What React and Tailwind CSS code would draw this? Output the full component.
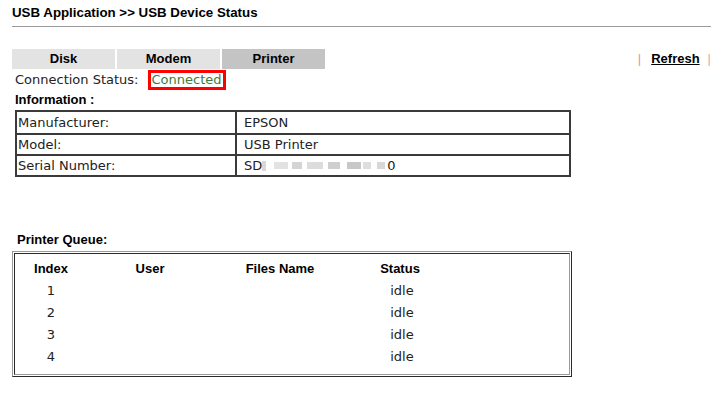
export default function App() {
    const info = [
        { label: "Manufacturer:", value: "EPSON" },
        { label: "Model:", value: "USB Printer" },
        { label: "Serial Number:", value: null },
    ];

    return (
        <div className="w-[727px] h-[411px] bg-white text-black font-['Liberation_Sans',Arial,sans-serif] overflow-hidden">

            {/* TITLE */}
            <div className="pl-[12px] pr-[16px] pt-[4px]">
                <div className="text-[13.3px] font-bold leading-[17px] h-[22px]">
                    USB Application &gt;&gt; USB Device Status
                </div>
                <div className="h-px bg-[#9a9a9a]" />
            </div>

            {/* TABS + REFRESH */}
            <div className="mt-[22px] pl-[12px] pr-[16px] flex items-center justify-between">
                <div className="flex gap-[2px]">
                    <div className="w-[103px] h-[20px] bg-[#e3e3e3] flex items-center justify-center text-[13px] font-bold">Disk</div>
                    <div className="w-[103px] h-[20px] bg-[#e3e3e3] flex items-center justify-center text-[13px] font-bold">Modem</div>
                    <div className="w-[103px] h-[20px] bg-[#c4c4c4] flex items-center justify-center text-[13px] font-bold">Printer</div>
                </div>
                <div className="flex items-center text-[13px] font-bold">
                    <span className="text-[#e89090] font-normal">|</span>
                    <span className="ml-[10px] underline">Refresh</span>
                    <span className="ml-[8px] text-[#f0a0a0] font-normal">|</span>
                </div>
            </div>

            {/* CONNECTION STATUS */}
            <div className="pl-[15px] flex items-center h-[21px] font-['DejaVu_Sans',Verdana,sans-serif] text-[13px]">
                <span className="text-[#222]">Connection Status:</span>
                <span className="ml-[9px] border-[3px] border-[#ff0000] px-px h-[20px] leading-[14px] text-[#3c7d3c]">Connected</span>
            </div>
            <div className="pl-[15px] text-[13px] font-bold leading-[18px] mt-px">Information :</div>

            {/* INFO TABLE */}
            <div className="ml-[15px] mt-px w-[556px] border-2 border-[#3a3a3a] font-['DejaVu_Sans',Verdana,sans-serif] text-[13px] text-[#222]">
                {info.map((row, i) => (
                    <div key={i} className={`flex h-[21px] items-center ${i > 0 ? "border-t-2 border-[#3a3a3a]" : ""}`}>
                        <div className="w-[220px] h-full pl-[1px] flex items-center border-r-2 border-[#3a3a3a]">{row.label}</div>
                        <div className="pl-[7px] flex items-center">
                            {row.value ?? (
                                <>
                                    <span>SD</span>
                                    <span className="w-[4px] h-[10px] bg-[#d8d8d8]" />
                                    <span className="ml-[8px] w-[14px] h-[7px] bg-[#e2e2e2]" />
                                    <span className="ml-[4px] w-[10px] h-[7px] bg-[#d4d4d4]" />
                                    <span className="ml-[5px] w-[16px] h-[7px] bg-[#dcdcdc]" />
                                    <span className="ml-[5px] w-[12px] h-[7px] bg-[#cfcfcf]" />
                                    <span className="ml-[7px] w-[14px] h-[7px] bg-[#c8c8c8]" />
                                    <span className="ml-[2px] w-[8px] h-[7px] bg-[#dedede]" />
                                    <span className="ml-[6px] w-[8px] h-[7px] bg-[#d8d8d8]" />
                                    <span className="ml-[2px]">0</span>
                                </>
                            )}
                        </div>
                    </div>
                ))}
            </div>

            {/* PRINTER QUEUE */}
            <div className="mt-[55px] pl-[17px] text-[13px] font-bold leading-[16px]">Printer Queue:</div>
            <div className="ml-[12px] mt-[3px] w-[560px] border border-t-[#9a9a9a] border-l-[#9a9a9a] border-r-[#2a2a2a] border-b-[#2a2a2a] p-px">
                <div className="h-[122px] border border-t-[#2a2a2a] border-l-[#2a2a2a] border-r-[#9a9a9a] border-b-[#9a9a9a] pt-[4px]">
                    <div className="grid grid-cols-[72px_126px_134px_106px] h-[22px] items-center text-[13px] font-bold">
                        <div className="text-center">Index</div>
                        <div className="text-center">User</div>
                        <div className="text-center">Files Name</div>
                        <div className="text-center">Status</div>
                    </div>
                    {[1, 2, 3, 4].map((n) => (
                        <div key={n} className="grid grid-cols-[72px_126px_134px_106px] h-[22px] items-center text-[13px] text-[#222] font-['DejaVu_Sans',Verdana,sans-serif]">
                            <div className="text-center">{n}</div>
                            <div />
                            <div />
                            <div className="text-center pl-[4px]">idle</div>
                        </div>
                    ))}
                </div>
            </div>

        </div>
    );
}
